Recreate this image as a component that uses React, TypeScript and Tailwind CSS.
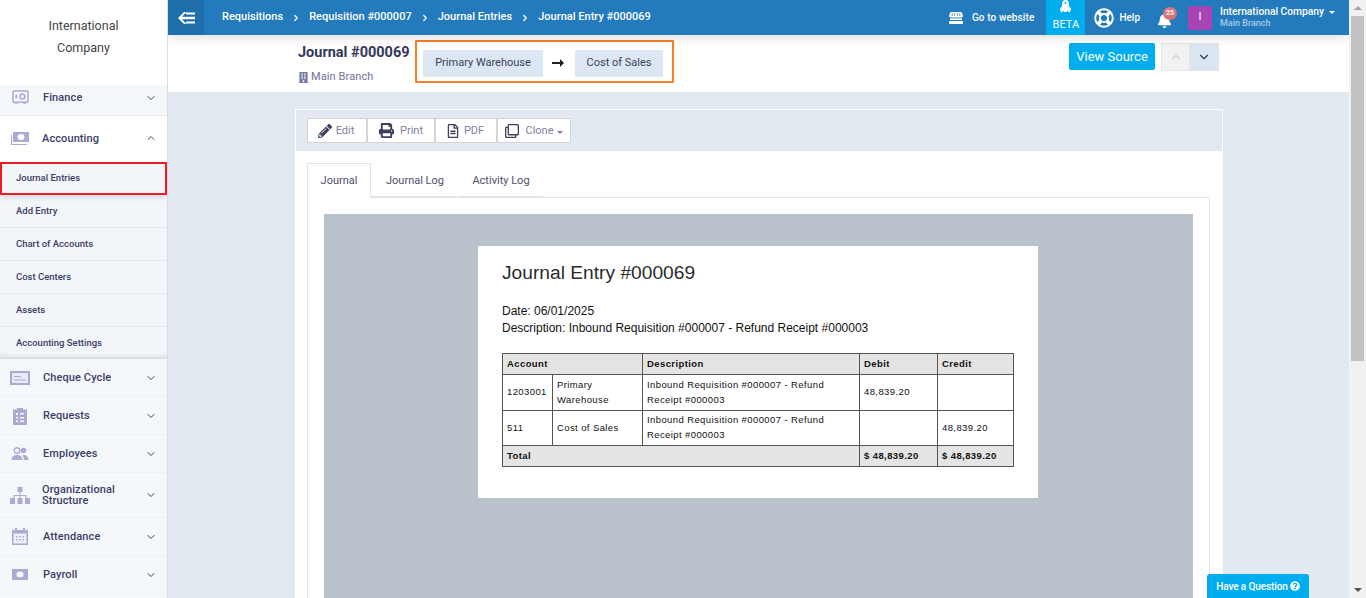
import React from 'react';
import { ChevronDown, ChevronUp, ChevronRight } from 'lucide-react';
import {
  FaPencilAlt,
  FaPrint,
  FaRegFileAlt,
  FaRegClone,
  FaBuilding,
  FaRegLifeRing,
  FaBell,
  FaRocket,
  FaQuestionCircle,
} from 'react-icons/fa';

const iconColor = '#a9abd3';

const FinanceIcon = () => (
  <svg width="17" height="14" viewBox="0 0 18 15" fill="none" stroke={iconColor}>
    <rect x="1" y="1" width="16" height="12" rx="1" strokeWidth="1.6" />
    <circle cx="11" cy="7" r="2.6" strokeWidth="1.6" />
    <rect x="3.5" y="5" width="2" height="4" fill={iconColor} stroke="none" />
    <path d="M3 14h3M12 14h3" strokeWidth="1.4" />
  </svg>
);

const AccountingIcon = () => (
  <svg width="20" height="15" viewBox="0 0 20 15" fill={iconColor}>
    <path d="M3 1h16v10H3z" />
    <ellipse cx="11" cy="6" rx="3.4" ry="3" fill="#fff" />
    <path d="M1 4h1v9h15v1H1z" />
  </svg>
);

const ChequeIcon = () => (
  <svg width="20" height="14" viewBox="0 0 20 14" fill="none">
    <rect x="1" y="1" width="18" height="12" fill="#e8eaf6" stroke={iconColor} strokeWidth="2" />
    <path d="M4 5.5h7M4 9h12" stroke={iconColor} strokeWidth="1.2" />
  </svg>
);

const RequestsIcon = () => (
  <svg width="16" height="18" viewBox="0 0 16 18" fill={iconColor}>
    <path d="M1 2.500h4V1h6v1.500h4V18H1z" />
    <path d="M4 6h2v2H4zM8 6h4v1.500H8zM4 10h2v1.500H4zM8 10h4v1.500H8zM4 13.500h2V15H4zM8 13.500h4V15H8z" fill="#f5f8fb" />
  </svg>
);

const EmployeesIcon = () => (
  <svg width="18" height="14" viewBox="0 0 18 14" fill={iconColor}>
    <circle cx="6" cy="3.500" r="2.800" fill="none" stroke={iconColor} strokeWidth="1.400" />
    <circle cx="12.500" cy="3.500" r="2.800" />
    <path d="M0.500 13c0-3.500 2.500-5 5.500-5s5.500 1.500 5.500 5z" />
    <path d="M12.500 8c2.800 0 5 1.500 5 5h-4.500c0-2-.6-3.500-1.800-4.600z" />
  </svg>
);

const OrgIcon = () => (
  <svg width="20" height="17" viewBox="0 0 20 17" fill={iconColor}>
    <rect x="7.500" y="0" width="5" height="5" />
    <path d="M9.500 5h1v3h6v3h-1V9h-5v2h-1V9h-5v2h-1V8h6z" />
    <rect x="0" y="11" width="5" height="6" />
    <rect x="7.500" y="11" width="5" height="6" />
    <rect x="15" y="11" width="5" height="6" />
  </svg>
);

const AttendanceIcon = () => (
  <svg width="16" height="17" viewBox="0 0 16 17" fill={iconColor}>
    <path d="M3 0h2v2h6V0h2v2h3v15H0V2h3z" />
    <rect x="1.500" y="5.500" width="13" height="10" fill="#eef0f8" />
    <path d="M4 8h1.500v1.500H4zM7.200 8h1.500v1.500H7.200zM10.500 8H12v1.500h-1.500zM4 11h1.500v1.500H4zM7.200 11h1.500v1.500H7.200zM10.500 11H12v1.500h-1.500z" />
  </svg>
);

const PayrollIcon = () => (
  <svg width="16" height="11" viewBox="0 0 16 11" fill={iconColor}>
    <rect width="16" height="11" />
    <ellipse cx="8" cy="5.500" rx="3.500" ry="3" fill="#f5f8fb" />
  </svg>
);

const StoreIcon = () => (
  <svg width="14" height="12" viewBox="0 0 14 12" fill="white" className="mr-[9px]">
    <path d="M1.500 0h11L14 3.500c0 1.200-.8 1.900-1.700 1.900H1.700C.8 5.400 0 4.700 0 3.500z" />
    <path d="M3.200 1v3M5.600 1v3M8.400 1v3M10.800 1v3" stroke="#237abd" strokeWidth="0.700" />
    <rect x="1" y="6.400" width="12" height="1.600" />
    <rect x="0" y="9" width="14" height="3" rx="0.500" />
  </svg>
);

const menuBottom = [
  { label: 'Cheque Cycle', icon: <ChequeIcon /> },
  { label: 'Requests', icon: <RequestsIcon /> },
  { label: 'Employees', icon: <EmployeesIcon /> },
  { label: 'Organizational Structure', icon: <OrgIcon />, tall: true },
  { label: 'Attendance', icon: <AttendanceIcon /> },
  { label: 'Payroll', icon: <PayrollIcon /> },
];

const subItems = ['Add Entry', 'Chart of Accounts', 'Cost Centers', 'Assets', 'Accounting Settings'];

const Sidebar = () => (
  <aside className="w-[168px] h-[598px] shrink-0 bg-[#f5f8fb] border-r border-[#d9dde3] overflow-hidden text-[#3c3e66]">
    <div className="h-[85px] bg-white pt-[15px] text-center text-[12.500px] leading-[22px] text-[#444]">
      International
      <br />
      Company
    </div>
    <div className="h-[31px] pr-[10px] flex items-start border-b border-[#e8ebf0] pt-[5px]">
      <span className="w-[43px] flex justify-center pr-[3px]"><FinanceIcon /></span>
      <span className="flex-1 text-[11px] font-medium tracking-[0.1px] leading-[16px]">Finance</span>
      <ChevronDown size={12} className="mt-[2px]" />
    </div>
    <div className="bg-white h-[46px] pb-[2px] pr-[10px] flex items-center">
      <span className="w-[42px] flex justify-center pr-[2px]"><AccountingIcon /></span>
      <span className="flex-1 pt-[2px] text-[11px] font-medium tracking-[0.1px]">Accounting</span>
      <ChevronUp size={12} />
    </div>
    <div className="bg-[#f2f5fa] h-[197px] overflow-hidden shadow-[inset_0_-6px_6px_-5px_rgba(0,0,0,0.18)]">
      <div className="h-[33px] flex items-center pl-[14px] border-2 border-[#ed1c24] text-[9.500px] font-medium shadow-[0_2px_6px_rgba(0,0,0,0.12)]">
        Journal Entries
      </div>
      {subItems.map((label) => (
        <div key={label} className="h-[33px] flex items-center pl-4 border-b border-[#e6e9ee] last:border-b-0 text-[9.500px] font-medium">
          {label}
        </div>
      ))}
    </div>
    {menuBottom.map((item) => (
      <div
        key={item.label}
        className={`pr-[10px] flex items-center border-b border-[#edf0f4] ${item.tall ? 'h-[45px]' : 'h-[38px]'}`}
      >
        <span className="w-[43px] flex justify-center pr-[3px]">{item.icon}</span>
        <span className={`flex-1 text-[11px] font-medium tracking-[0.1px] ${item.tall ? 'leading-[11px] -ml-[1px]' : 'pt-[1px]'}`}>
          {item.label === 'Organizational Structure' ? (
            <>
              Organizational
              <br />
              Structure
            </>
          ) : (
            item.label
          )}
        </span>
        <ChevronDown size={12} />
      </div>
    ))}
  </aside>
);

const crumbs = ['Requisitions', 'Requisition #000007', 'Journal Entries', 'Journal Entry #000069'];

const TopBar = () => (
  <header className="h-[35px] bg-[#237abd] flex items-center text-white shadow-[0_3px_10px_rgba(0,0,0,0.12)] relative z-10">
    <div className="w-9 h-full bg-[#1e6ea9] flex items-center justify-center">
      <svg width="17" height="12" viewBox="0 0 17 12" fill="white">
        <path d="M0 6l6-6h2.500L4 4.800h13v2.400H4L8.500 12H6z" />
        <rect x="8" y="0.500" width="9" height="2" />
        <rect x="8" y="9.500" width="9" height="2" />
      </svg>
    </div>
    <nav className="flex items-center ml-[18px] text-[11px] font-medium tracking-[0.02px]">
      {crumbs.map((c, i) => (
        <React.Fragment key={c}>
          {i > 0 && <ChevronRight size={10} strokeWidth={3} className="mx-[8px]" />}
          <span>{c}</span>
        </React.Fragment>
      ))}
    </nav>
    <div className="ml-auto flex items-center h-full">
      <StoreIcon />
      <span className="text-[10px] font-medium tracking-[0.1px] mr-[12px]">Go to website</span>
      <div className="w-[39px] h-full bg-[#00aeef] flex flex-col items-center pt-[1px]">
        <FaRocket size={13} className="-rotate-45" />
        <span className="text-[11px] leading-[12px] mt-[5px]">BETA</span>
      </div>
      <FaRegLifeRing size={20} className="ml-[9px]" />
      <span className="text-[10px] font-medium ml-[5px]">Help</span>
      <div className="relative ml-[17px] w-[18px] h-[20px] flex items-end">
        <FaBell size={15} />
        <span className="absolute -top-[1px] left-[6px] w-[14px] h-[13px] rounded-full bg-[#d9727a] text-[7px] font-bold flex items-center justify-center">
          25
        </span>
      </div>
      <div className="ml-[13px] w-6 h-6 rounded-[2px] bg-[#a944b4] flex items-center justify-center text-[11px]">I</div>
      <div className="ml-2 w-[129px] leading-none">
        <div className="text-[10.250px] font-medium flex items-center whitespace-nowrap">
          International Company
          <span className="ml-[5px] w-0 h-0 border-x-[3px] border-x-transparent border-t-[3px] border-t-white" />
        </div>
        <div className="text-[9px] font-medium text-[#a9cde9] mt-[2px]">Main Branch</div>
      </div>
    </div>
  </header>
);

const TitleBar = () => (
  <div className="h-[58px] bg-white border-b border-[#dfe4ea] flex items-start pl-[130px] pr-[130px]">
    <div className="w-[117px] pt-[9px]">
      <div className="text-[14.500px] leading-[18px] font-bold text-[#34365a] whitespace-nowrap">Journal #000069</div>
      <div className="flex items-center text-[11px] tracking-[0.1px] text-[#6f7196] mt-[7px] gap-[2px]">
        <FaBuilding size={11} className="text-[#7a7ca8]" />
        Main Branch
      </div>
    </div>
    <div className="mt-[5px] w-[259px] h-[43px] border-2 border-[#f58025] flex items-center pl-[5px] pt-[4px] text-[11px] text-[#3c3e5e] rounded-[1px]">
      <span className="h-[27px] ml-[1px] w-[120px] bg-[#dce7f3] flex items-center justify-center">Primary Warehouse</span>
      <svg width="12" height="8" viewBox="0 0 12 8" fill="#222" className="ml-[9px] mr-[11px] -mt-[2px]">
        <path d="M0 3h8V0l4 4-4 4V5H0z" />
      </svg>
      <span className="h-[27px] w-[88px] bg-[#dce7f3] flex items-center justify-center">Cost of Sales</span>
    </div>
    <div className="ml-auto flex mt-2">
      <div className="w-[86px] h-[27px] bg-[#00aeef] rounded-[2px] text-white text-[13px] flex items-center justify-center">
        View Source
      </div>
      <div className="ml-[6px] w-[29px] h-[28px] bg-[#f2f2f2] border border-[#e2e5ea] flex items-center justify-center">
        <ChevronUp size={14} className="text-[#d0d0d0]" />
      </div>
      <div className="w-[29px] h-[28px] bg-[#dae5f1] border border-[#e2e5ea] border-l-0 flex items-center justify-center">
        <ChevronDown size={14} className="text-[#34365a]" />
      </div>
    </div>
  </div>
);

const toolButtons = [
  { label: 'Edit', icon: <FaPencilAlt size={14} className="text-[#3d3f5c]" />, box: 'w-[60px] gap-[4px] pr-[2px]' },
  { label: 'Print', icon: <FaPrint size={15} className="text-[#3d3f5c]" />, box: 'w-[68px] gap-[6px]' },
  { label: 'PDF', icon: <FaRegFileAlt size={14} className="text-[#3d3f5c]" />, box: 'w-[62px] gap-[4px] pr-[2px]' },
  { label: 'Clone', icon: <FaRegClone size={14} className="text-[#3d3f5c]" />, box: 'w-[74px] gap-[6px]', caret: true },
];

const Toolbar = () => (
  <div className="h-[41px] bg-[#e3e9f1] pt-[8px] pl-[11px] flex">
    {toolButtons.map((b) => (
      <div key={b.label} className={`${b.box} h-[25px] bg-white border border-[#d4d4d4] flex items-center justify-center text-[11px] text-[#7d7f9e]`}>
        {b.icon}
        <span className="flex items-center pt-[2px]">
          {b.label}
          {b.caret && <span className="ml-[3px] mt-[1px] w-0 h-0 border-x-[3px] border-x-transparent border-t-[3px] border-t-[#7d7f9e]" />}
        </span>
      </div>
    ))}
  </div>
);

const Tabs = () => (
  <div className="flex h-[35px] pl-[11px] text-[11px] text-[#4d4f6c]">
    <div className="w-[64px] h-[35px] pt-[1px] bg-white border border-[#dfe4ea] border-b-white flex items-center justify-center z-10">Journal</div>
    <div className="w-[86px] mr-[2px] pl-[2px] pt-[3px] h-[34px] border-b border-[#dfe4ea] flex items-center justify-center">Journal Log</div>
    <div className="w-[84px] h-[34px] pt-[3px] border-b border-[#dfe4ea] flex items-center justify-center">Activity Log</div>
  </div>
);

const cell = 'border border-[#555] px-[4px] pb-[2px] align-middle';

const JournalTable = () => (
  <table className="w-[511px] border-collapse table-fixed text-[9.500px] leading-[15px] tracking-[0.4px] text-[#111] mt-[16px]">
    <colgroup>
      <col className="w-[50px]" />
      <col className="w-[90px]" />
      <col className="w-[217px]" />
      <col className="w-[78px]" />
      <col className="w-[76px]" />
    </colgroup>
    <tbody>
      <tr className="bg-[#e4e4e4] font-bold h-[21px]">
        <td className={cell} colSpan={2}>Account</td>
        <td className={cell}>Description</td>
        <td className={cell}>Debit</td>
        <td className={cell}>Credit</td>
      </tr>
      <tr className="h-[36px]">
        <td className={cell}>1203001</td>
        <td className={cell}>Primary Warehouse</td>
        <td className={cell}>Inbound Requisition #000007 - Refund Receipt #000003</td>
        <td className={cell}>48,839.20</td>
        <td className={cell}></td>
      </tr>
      <tr className="h-[35px]">
        <td className={cell}>511</td>
        <td className={cell}>Cost of Sales</td>
        <td className={cell}>Inbound Requisition #000007 - Refund Receipt #000003</td>
        <td className={cell}></td>
        <td className={cell}>48,839.20</td>
      </tr>
      <tr className="bg-[#e4e4e4] font-bold h-[21px]">
        <td className={cell} colSpan={3}>Total</td>
        <td className={cell}>$ 48,839.20</td>
        <td className={cell}>$ 48,839.20</td>
      </tr>
    </tbody>
  </table>
);

const Paper = () => (
  <div className="w-[560px] h-[252px] bg-white ml-[154px] px-6 pt-[14px] [font-family:Liberation_Sans,Arial,sans-serif]">
    <div className="text-[19.200px] leading-[26px] text-[#2b2b2b]">Journal Entry #000069</div>
    <div className="text-[12px] leading-[17px] text-[#111] mt-[17px]">
      Date: 06/01/2025
      <br />
      Description: Inbound Requisition #000007 - Refund Receipt #000003
    </div>
    <JournalTable />
  </div>
);

const Scrollbar = () => (
  <div className="w-[17px] h-[598px] shrink-0 bg-[#f1f1f1] flex flex-col items-center">
    <span className="mt-[6px] w-0 h-0 border-x-[4px] border-x-transparent border-b-[4px] border-b-[#a3a3a3]" />
    <div className="mt-[6px] w-[13px] h-[345px] bg-[#c1c1c1]" />
    <span className="mt-auto mb-[6px] w-0 h-0 border-x-[4px] border-x-transparent border-t-[4px] border-t-[#505050]" />
  </div>
);

export default function App() {
  return (
    <div className="relative flex w-[1366px] h-[598px] overflow-hidden bg-[#e3e9f1] [font-family:Roboto,sans-serif]">
      <Sidebar />
      <main className="flex-1 min-w-0 flex flex-col h-[598px] overflow-hidden">
        <TopBar />
        <TitleBar />
        <div className="flex-1 pt-4 pl-[127px] pr-[126px] overflow-hidden">
          <div className="bg-white border border-white h-[600px]">
            <Toolbar />
            <div className="pt-3">
              <Tabs />
              <div className="ml-[11px] mr-3 border border-[#dfe4ea] -mt-[1px] p-4 h-[500px]">
                <div className="bg-[#b9c1cb] h-[480px] pt-8">
                  <Paper />
                </div>
              </div>
            </div>
          </div>
        </div>
      </main>
      <Scrollbar />
      <div className="absolute left-[1207px] top-[574px] w-[102px] h-[24px] rounded-t-[3px] bg-[#00aeef] text-white text-[10px] font-medium tracking-[-0.1px] flex items-center justify-center gap-[2px]">
        Have a Question
        <FaQuestionCircle size={10} />
      </div>
    </div>
  );
}
